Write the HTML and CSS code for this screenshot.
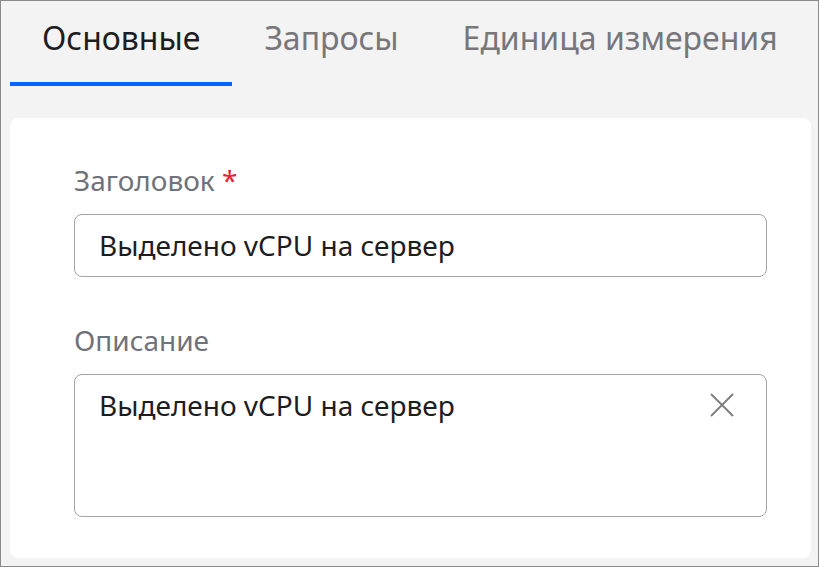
FILE: index.html
```html
<!DOCTYPE html>
<html lang="ru">
<head>
    <meta charset="UTF-8">
    <meta name="viewport" content="width=device-width, initial-scale=1.0">
    <title>Настройки графика</title>
    <link rel="stylesheet" href="styles.css">
</head>
<body>

<div class="frame">
    <nav class="tabs">
        <div class="tab tab-active">Основные</div>
        <div class="tab">Запросы</div>
        <div class="tab">Единица измерения</div>
    </nav>

    <div class="card">
        <div class="field field-first">
            <div class="field-label">Заголовок <span class="required">*</span></div>
            <div class="text-input">Выделено vCPU на сервер</div>
        </div>

        <div class="field">
            <div class="field-label">Описание</div>
            <div class="text-area">
                <span>Выделено vCPU на сервер</span>
                <svg class="clear" width="24" height="24" viewBox="0 0 24 24">
                    <path d="M1 1 L23 23 M23 1 L1 23" stroke="#808080" stroke-width="2" fill="none" />
                </svg>
            </div>
        </div>
    </div>
</div>

</body>
</html>
```

FILE: styles.css
```css
* {
    box-sizing: border-box;
    font-family: 'Noto Sans', 'Open Sans', sans-serif;
}

body {
    margin: 0;
    padding: 0;
}

.frame {
    display: flex;
    flex-direction: column;
    height: 567px;
    border: 1px solid #8a8a8a;
    background-color: #f3f3f3;
    padding: 0 7px 8px 9px;
}

.tabs {
    display: flex;
    flex-direction: row;
}
.tab {
    padding: 17px 32px 0;
    height: 85px;
    font-size: 32px;
    line-height: 40px;
    color: #77777b;
    border-bottom: 4px solid transparent;
}
.tab-active {
    color: #1d1d1f;
    border-bottom-color: #0066ff;
}

.card {
    flex-grow: 1;
    margin-top: 32px;
    background-color: white;
    border-radius: 8px;
    padding: 40px 44px 0 64px;
}

.field {
    margin-top: 41px;
}
.field-first {
    margin-top: 0;
}
.field-label {
    font-size: 28px;
    line-height: 44px;
    color: #707279;
    margin-bottom: 12px;
}
.required {
    color: #e8232e;
}

.text-input, .text-area {
    border: 1px solid #a3a3a6;
    border-radius: 8px;
    font-size: 28px;
    color: #1d1d1f;
    padding: 0 24px;
}
.text-input {
    height: 63px;
    line-height: 61px;
}
.text-area {
    display: flex;
    justify-content: space-between;
    align-items: flex-start;
    height: 143px;
    padding-top: 8px;
    padding-right: 32px;
    line-height: 44px;
}
.clear {
    margin-top: 10px;
}
```
